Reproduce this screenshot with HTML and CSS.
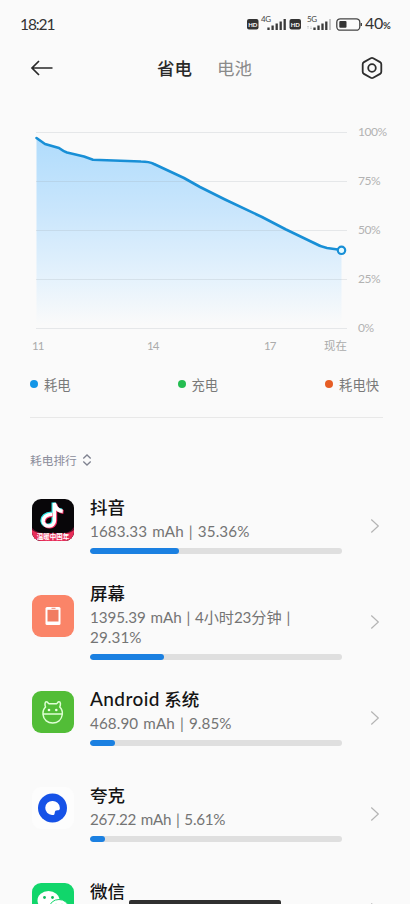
FILE: index.html
```html
<!DOCTYPE html>
<html lang="zh-CN">
<head>
<meta charset="utf-8">
<meta name="viewport" content="width=device-width, initial-scale=1">
<title>省电</title>
<link rel="stylesheet" href="styles.css">
</head>
<body>
<div class="screen">
  <div class="status">
    <span class="clock">18:21</span>
    <div class="status-right">
      <svg class="signals" width="116" height="20" viewBox="0 0 116 20">
        <rect x="0" y="5" width="11.500" height="10.500" rx="2" fill="#333"/>
        <text x="5.750" y="12.500" class="hd" text-anchor="middle">HD</text>
        <text x="14" y="8.300" class="net">4G</text>
        <path d="M21.500 13.500v2.500M25.600 11.500v4.500M29.700 9.500v6.500M33.700 7.500v8.500M37.700 5v11" stroke="#3a3a3a" stroke-width="2.300"/>
        <rect x="42.500" y="5" width="11.500" height="10.500" rx="2" fill="#333"/>
        <text x="48.250" y="12.500" class="hd" text-anchor="middle">HD</text>
        <text x="60" y="8.300" class="net">5G</text>
        <path d="M61 15v-3m-1 1l1-1 1 1M64 12v3m-1-1l1 1 1-1" stroke="#c4c4c4" stroke-width=".6" fill="none"/>
        <path d="M67.500 13.500v2.500M71.500 11.500v4.500M75.500 9.500v6.500M79.300 7.500v8.500" stroke="#3a3a3a" stroke-width="2.300"/>
        <path d="M83 5v11" stroke="#c4c4c4" stroke-width="2"/>
        <rect x="89.800" y="4.800" width="23" height="11.400" rx="3.500" fill="none" stroke="#444" stroke-width="1.300"/>
        <rect x="92.300" y="7" width="7.200" height="6.800" rx="1" fill="#333"/>
        <path d="M114.300 9v3" stroke="#444" stroke-width="1.400"/>
      </svg>
      <span class="level">40<small>%</small></span>
    </div>
  </div>

  <header class="topbar">
    <svg class="back" width="24" height="20" viewBox="0 0 24 20"><path d="M22.500 10H2M9 3L2 10l7 7" fill="none" stroke="#292929" stroke-width="1.700"/></svg>
    <nav class="tabs"><span class="tab active">省电</span><span class="tab">电池</span></nav>
    <svg class="gear" width="24" height="24" viewBox="0 0 24 24"><path d="M10.800 2.200Q12 1.500 13.200 2.200L20.100 6.100Q21.300 6.800 21.300 8.200V15.800Q21.300 17.200 20.100 17.900L13.200 21.800Q12 22.500 10.800 21.800L3.900 17.900Q2.700 17.200 2.700 15.800V8.200Q2.700 6.800 3.900 6.100Z" fill="none" stroke="#2e2e2e" stroke-width="1.800"/><circle cx="12" cy="12" r="3.800" fill="none" stroke="#2e2e2e" stroke-width="1.800"/></svg>
  </header>

  <section class="chart">
    <svg class="plot" width="322" height="214" viewBox="0 0 322 214">
      <defs>
        <linearGradient id="fill" x1="0" y1="0" x2="0" y2="1">
          <stop offset="0" stop-color="#b0dcfc"/>
          <stop offset=".4" stop-color="#cae6fc"/>
          <stop offset=".75" stop-color="#e5f2fc"/>
          <stop offset="1" stop-color="#fafafa"/>
        </linearGradient>
      </defs>
      <path d="M6.500 18L15 24 29 28Q33 31 37 32.500L54 36.500 63 39.500 111 41.500Q119 41.500 124 44L154 58 170 67 195 79.500 232 97 256 109.500 283 122.500Q290 126.500 297 128L311.500 130V205H6.500Z" fill="url(#fill)"/>
      <path d="M6 12.500H317M6 61.500H317M6 110.500H317M6 159.500H317M6 208.500H317" stroke="#9aa5ad" stroke-opacity=".22" stroke-width="1"/>
      <path d="M6.500 18L15 24 29 28Q33 31 37 32.500L54 36.500 63 39.700 111 41.500Q119 41.500 124 44L154 58 170 67 195 79.500 232 97 256 109.500 283 122.500Q290 126.500 297 128L311.500 130" fill="none" stroke="#188fd6" stroke-width="2.600" stroke-linecap="round" stroke-linejoin="round"/>
      <circle cx="311.500" cy="130.300" r="3.700" fill="#e4faff" stroke="#188fd6" stroke-width="2.200"/>
    </svg>
    <div class="percents"><span>100%</span><span>75%</span><span>50%</span><span>25%</span><span>0%</span></div>
  </section>
  <div class="hours"><span>11</span><span>14</span><span>17</span><span>现在</span></div>

  <div class="legend">
    <span class="key"><i class="dot blue"></i>耗电</span>
    <span class="key"><i class="dot green"></i>充电</span>
    <span class="key"><i class="dot orange"></i>耗电快</span>
  </div>

  <div class="sort">耗电排行<svg width="10" height="12" viewBox="0 0 10 12"><path d="M1.300 4.500L5 1l3.700 3.500M1.300 7.500L5 11l3.700-3.500" fill="none" stroke="#7f8290" stroke-width="1.300"/></svg></div>

  <main class="list">
    <article class="row">
      <svg class="icon" viewBox="0 0 42 42">
        <defs><clipPath id="tile"><rect width="42" height="42" rx="9"/></clipPath></defs>
        <g clip-path="url(#tile)">
          <rect width="42" height="42" fill="#080609"/>
          <path d="M0 29Q5 34 12 34H31Q38 34 42 28V42H0Z" fill="#640f2c"/>
          <path d="M0 31Q5 34.500 12 34.500H31Q38 34.500 42 31V42H0Z" fill="#e72d59"/>
          <g fill="none" stroke-width="4">
            <path d="M19.300 14.500C13.500 14.500 10 18 10.300 22 11 28.500 21.500 28 21.500 21V3.500C22.300 8.500 25.500 11 30 11.500" stroke="#2de4e5"/>
            <path d="M21 16C15.200 16 11.700 19 12 23 13 29.500 23.200 29 23.200 22V5C24 10 27 12.500 31.500 13" stroke="#f52d63"/>
            <path d="M20.200 15.200C14.400 15.200 10.900 18.500 11.200 22.500 12 29 22.400 28.500 22.400 21.500V4C23.200 9 26.200 11.700 30.700 12.200" stroke="#fff" stroke-width="3.500"/>
          </g>
          <text x="21" y="40" class="slogan" text-anchor="middle">温暖中国年</text>
        </g>
      </svg>
      <div class="info"><h2>抖音</h2><p>1683.33 mAh | 35.36%</p><div class="bar"><div style="width:35.36%"></div></div></div>
      <svg class="chev" viewBox="0 0 10 16"><path d="M1.300 1.500L8.300 8l-7 6.500"/></svg>
    </article>
    <article class="row">
      <svg class="icon" viewBox="0 0 42 42"><rect width="42" height="42" rx="9" fill="#fa8468"/><rect x="13.500" y="12" width="15" height="18" rx="1.500" fill="#fff"/><rect x="15.500" y="14.800" width="11" height="11.700" fill="#f17c61"/><path d="M19.500 13.300h4" stroke="#f17c61" stroke-width=".9"/></svg>
      <div class="info"><h2>屏幕</h2><p><span class="tight">1395.39 mAh | 4小时23分钟 |</span><br>29.31%</p><div class="bar"><div style="width:29.31%"></div></div></div>
      <svg class="chev" viewBox="0 0 10 16"><path d="M1.300 1.500L8.300 8l-7 6.500"/></svg>
    </article>
    <article class="row">
      <svg class="icon" viewBox="0 0 42 42"><rect width="42" height="42" rx="9" fill="#52bd37"/><g fill="none" stroke="#dfffd5" stroke-width="1.500"><path d="M13.500 16C12.500 13.500 13 10.500 14.500 10.700 15.700 10.700 16 12.500 17 12.700H24.500C25.500 12.500 25.500 10.700 27 10.700 28.700 10.700 28.800 13.500 27.800 16 29.800 18 30.700 20.500 30.300 23.500 29.500 29 25.500 32 20.700 32S11.500 29 11 23.500C10.700 20.500 11.500 18 13.500 16ZM11.200 23H30"/></g><circle cx="17" cy="19" r="1.300" fill="#edffe8"/><circle cx="24.300" cy="19" r="1.300" fill="#edffe8"/></svg>
      <div class="info"><h2><span class="latin">Android</span> 系统</h2><p>468.90 mAh | 9.85%</p><div class="bar"><div style="width:9.85%"></div></div></div>
      <svg class="chev" viewBox="0 0 10 16"><path d="M1.300 1.500L8.300 8l-7 6.500"/></svg>
    </article>
    <article class="row">
      <svg class="icon" viewBox="0 0 42 42"><rect width="42" height="42" rx="9" fill="#fdfdfd"/><circle cx="20.500" cy="21" r="14.500" fill="#1652e7"/><path d="M20.500 14A7 7 0 0 1 27.800 20.500C28.200 23 27 23.300 25.500 23.300 23.500 23.300 23 24 22.700 26 22.500 28 21.500 28.300 20 28A7 7 0 0 1 20.500 14Z" fill="#fff"/></svg>
      <div class="info"><h2>夸克</h2><p class="narrow">267.22 mAh | 5.61%</p><div class="bar"><div style="width:5.9%"></div></div></div>
      <svg class="chev" viewBox="0 0 10 16"><path d="M1.300 1.500L8.300 8l-7 6.500"/></svg>
    </article>
    <article class="row">
      <svg class="icon" viewBox="0 0 42 42"><rect width="42" height="42" rx="9" fill="#11d66b"/><ellipse cx="16.500" cy="17.500" rx="11" ry="9.500" fill="#fff"/><path d="M9 24l-1 5 5-3" fill="#fff"/><circle cx="12.500" cy="14.500" r="1.400" fill="#11ba5d"/><circle cx="20.500" cy="14.500" r="1.400" fill="#11ba5d"/><ellipse cx="27" cy="24.500" rx="9.500" ry="8" fill="#fff" stroke="#11d66b"/><circle cx="24" cy="22" r="1.200" fill="#11ba5d"/><circle cx="30" cy="22" r="1.200" fill="#11ba5d"/></svg>
      <div class="info"><h2>微信</h2><p>&nbsp;</p><div class="bar"></div></div>
      <svg class="chev" viewBox="0 0 10 16"><path d="M1.300 1.500L8.300 8l-7 6.500"/></svg>
    </article>
  </main>
  <div class="home"></div>
</div>
</body>
</html>
```
FILE: styles.css
```css
* { box-sizing: border-box; }
body { margin: 0; background: #fafafa; font-family: Lato, "Noto Sans CJK SC", sans-serif; }
.screen { position: relative; width: 410px; height: 904px; overflow: hidden; background: #fafafa; }
svg { display: block; flex: none; }

.status { height: 48px; padding: 0 19px 0 20px; display: flex; align-items: center; justify-content: space-between; color: #333; }
.clock { font-size: 15.500px; line-height: 20px; letter-spacing: -1.100px; }
.status-right { display: flex; align-items: center; gap: 2px; }
.level { font-size: 16px; line-height: 20px; width: 26px; white-space: nowrap; letter-spacing: -.3px; }
.level small { font-size: 9.500px; font-weight: 700; }
.hd { font: 700 6px Lato, sans-serif; fill: #fff; }
.net { font: 8px Lato, sans-serif; fill: #444; letter-spacing: -.3px; }

.topbar { height: 40px; padding: 0 26px 0 30px; display: flex; align-items: center; }
.tabs { display: flex; gap: 25px; margin-left: 103px; padding-top: 2px; flex: 1; }
.tab { font-size: 17.500px; line-height: 26px; color: #8b8b8b; }
.tab.active { color: #292929; font-weight: 500; }

.chart { margin-top: 32px; padding-left: 30px; display: flex; height: 214px; }
.percents { margin-left: 6px; padding-top: 2px; display: flex; flex-direction: column; gap: 29px; }
.percents span { font-size: 12px; line-height: 20px; color: #b2b2b2; letter-spacing: -.45px; }
.hours { height: 24px; padding: 0 63px 0 32px; display: grid; grid-template-columns: 115px 117px 1fr auto; font-size: 11.500px; line-height: 24px; color: #ababab; letter-spacing: -.8px; }
.hours span:last-child { letter-spacing: 0; }

.legend { height: 61px; margin: -1px 27px 0 30px; padding: 12px 4px 0 0; border-bottom: 1px solid #e8e8e8; display: flex; justify-content: space-between; }
.key { display: flex; align-items: center; height: 30px; font-size: 13.300px; color: #797979; }
.dot { width: 8px; height: 8px; border-radius: 50%; margin-right: 6px; }
.blue { background: #1396e7; }
.green { background: #24bd51; }
.orange { background: #e65d24; }

.sort { height: 60px; padding: 23px 30px 0; display: flex; align-items: center; gap: 5px; font-size: 11.700px; color: #8b8d9b; }
.row { height: 96px; padding: 0 31px 0 32px; display: flex; align-items: center; }
.icon { width: 42px; height: 42px; margin-bottom: 12px; }
.info { width: 252px; margin: 0 28px 3px 16px; flex: none; }
.info h2 { margin: 0; font-size: 17.500px; line-height: 26px; font-weight: 500; color: #141414; }
.latin { font-size: 19px; letter-spacing: .4px; line-height: 20px; }
.info p { margin: 0 0 7px; font-size: 15.200px; line-height: 20px; letter-spacing: .1px; word-spacing: 1.100px; color: #747474; white-space: nowrap; }
.info p.narrow { letter-spacing: -.25px; }
.tight { letter-spacing: -.1px; }
.bar { height: 6px; border-radius: 3px; background: #dfdfdf; overflow: hidden; }
.bar div { height: 100%; border-radius: 3px; background: #1b80e1; }
.chev { width: 10px; height: 16px; fill: none; stroke: #b4b4b4; stroke-width: 1.200; }
.slogan { font: 700 6.500px "Noto Sans CJK SC", sans-serif; fill: #fff; }
.home { position: absolute; left: 129px; top: 900px; width: 152px; height: 4px; border-radius: 2px 2px 0 0; background: #303030; }
```
